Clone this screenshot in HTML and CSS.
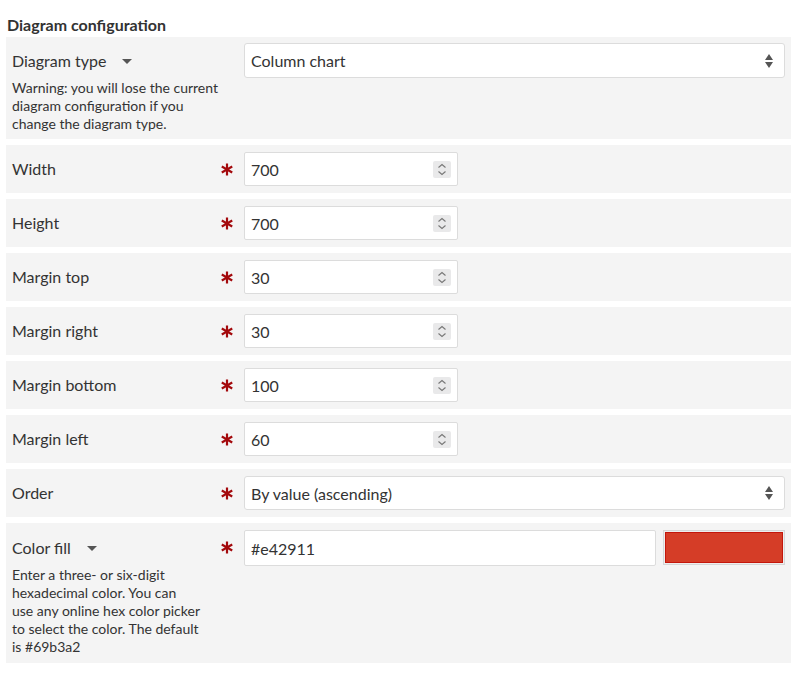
FILE: index.html
```html
<!DOCTYPE html>
<html>
<head>
<meta charset="utf-8">
<link rel="stylesheet" href="styles.css">
</head>
<body>
<div class="page">
  <h2 class="title">Diagram configuration</h2>

  <div class="row row-first">
    <div class="label-col">
      <div class="label">Diagram type <span class="caret"></span></div>
      <div class="help">Warning: you will lose the current diagram configuration if you change the diagram type.</div>
    </div>
    <div class="req"></div>
    <div class="field">
      <div class="select"><span class="val">Column chart</span>
        <svg class="updown" width="10" height="16" viewBox="0 0 10 16"><path d="M5 1 L9 7 L1 7 Z M5 15 L9 9 L1 9 Z" fill="#555"/></svg>
      </div>
    </div>
  </div>

  <div class="row">
    <div class="label-col"><div class="label">Width</div></div>
    <div class="req"><svg class="ast" width="12" height="13" viewBox="0 0 12 13"><g stroke="#a3090c" stroke-width="2.2" stroke-linecap="butt"><line x1="6" y1="0.5" x2="6" y2="12.5"/><line x1="0.8" y1="3.5" x2="11.2" y2="9.5"/><line x1="0.8" y1="9.5" x2="11.2" y2="3.5"/></g></svg></div>
    <div class="field">
      <div class="num"><span class="val">700</span><span class="spin"><svg width="18" height="17" viewBox="0 0 18 17"><path d="M5.5 6.5 L9 3.5 L12.5 6.5 M5.5 10.5 L9 13.5 L12.5 10.5" fill="none" stroke="#777" stroke-width="1.1"/></svg></span></div>
    </div>
  </div>

  <div class="row">
    <div class="label-col"><div class="label">Height</div></div>
    <div class="req"><svg class="ast" width="12" height="13" viewBox="0 0 12 13"><g stroke="#a3090c" stroke-width="2.2"><line x1="6" y1="0.5" x2="6" y2="12.5"/><line x1="0.8" y1="3.5" x2="11.2" y2="9.5"/><line x1="0.8" y1="9.5" x2="11.2" y2="3.5"/></g></svg></div>
    <div class="field">
      <div class="num"><span class="val">700</span><span class="spin"><svg width="18" height="17" viewBox="0 0 18 17"><path d="M5.5 6.5 L9 3.5 L12.5 6.5 M5.5 10.5 L9 13.5 L12.5 10.5" fill="none" stroke="#777" stroke-width="1.1"/></svg></span></div>
    </div>
  </div>

  <div class="row">
    <div class="label-col"><div class="label">Margin top</div></div>
    <div class="req"><svg class="ast" width="12" height="13" viewBox="0 0 12 13"><g stroke="#a3090c" stroke-width="2.2"><line x1="6" y1="0.5" x2="6" y2="12.5"/><line x1="0.8" y1="3.5" x2="11.2" y2="9.5"/><line x1="0.8" y1="9.5" x2="11.2" y2="3.5"/></g></svg></div>
    <div class="field">
      <div class="num"><span class="val">30</span><span class="spin"><svg width="18" height="17" viewBox="0 0 18 17"><path d="M5.5 6.5 L9 3.5 L12.5 6.5 M5.5 10.5 L9 13.5 L12.5 10.5" fill="none" stroke="#777" stroke-width="1.1"/></svg></span></div>
    </div>
  </div>

  <div class="row">
    <div class="label-col"><div class="label">Margin right</div></div>
    <div class="req"><svg class="ast" width="12" height="13" viewBox="0 0 12 13"><g stroke="#a3090c" stroke-width="2.2"><line x1="6" y1="0.5" x2="6" y2="12.5"/><line x1="0.8" y1="3.5" x2="11.2" y2="9.5"/><line x1="0.8" y1="9.5" x2="11.2" y2="3.5"/></g></svg></div>
    <div class="field">
      <div class="num"><span class="val">30</span><span class="spin"><svg width="18" height="17" viewBox="0 0 18 17"><path d="M5.5 6.5 L9 3.5 L12.5 6.5 M5.5 10.5 L9 13.5 L12.5 10.5" fill="none" stroke="#777" stroke-width="1.1"/></svg></span></div>
    </div>
  </div>

  <div class="row">
    <div class="label-col"><div class="label">Margin bottom</div></div>
    <div class="req"><svg class="ast" width="12" height="13" viewBox="0 0 12 13"><g stroke="#a3090c" stroke-width="2.2"><line x1="6" y1="0.5" x2="6" y2="12.5"/><line x1="0.8" y1="3.5" x2="11.2" y2="9.5"/><line x1="0.8" y1="9.5" x2="11.2" y2="3.5"/></g></svg></div>
    <div class="field">
      <div class="num"><span class="val">100</span><span class="spin"><svg width="18" height="17" viewBox="0 0 18 17"><path d="M5.5 6.5 L9 3.5 L12.5 6.5 M5.5 10.5 L9 13.5 L12.5 10.5" fill="none" stroke="#777" stroke-width="1.1"/></svg></span></div>
    </div>
  </div>

  <div class="row">
    <div class="label-col"><div class="label">Margin left</div></div>
    <div class="req"><svg class="ast" width="12" height="13" viewBox="0 0 12 13"><g stroke="#a3090c" stroke-width="2.2"><line x1="6" y1="0.5" x2="6" y2="12.5"/><line x1="0.8" y1="3.5" x2="11.2" y2="9.5"/><line x1="0.8" y1="9.5" x2="11.2" y2="3.5"/></g></svg></div>
    <div class="field">
      <div class="num"><span class="val">60</span><span class="spin"><svg width="18" height="17" viewBox="0 0 18 17"><path d="M5.5 6.5 L9 3.5 L12.5 6.5 M5.5 10.5 L9 13.5 L12.5 10.5" fill="none" stroke="#777" stroke-width="1.1"/></svg></span></div>
    </div>
  </div>

  <div class="row">
    <div class="label-col"><div class="label">Order</div></div>
    <div class="req"><svg class="ast" width="12" height="13" viewBox="0 0 12 13"><g stroke="#a3090c" stroke-width="2.2"><line x1="6" y1="0.5" x2="6" y2="12.5"/><line x1="0.8" y1="3.5" x2="11.2" y2="9.5"/><line x1="0.8" y1="9.5" x2="11.2" y2="3.5"/></g></svg></div>
    <div class="field">
      <div class="select"><span class="val">By value (ascending)</span>
        <svg class="updown" width="10" height="16" viewBox="0 0 10 16"><path d="M5 1 L9 7 L1 7 Z M5 15 L9 9 L1 9 Z" fill="#555"/></svg>
      </div>
    </div>
  </div>

  <div class="row">
    <div class="label-col">
      <div class="label">Color fill <span class="caret"></span></div>
      <div class="help">Enter a three- or six-digit hexadecimal color. You can<br>use any online hex color picker<br>to select the color. The default<br>is #69b3a2</div>
    </div>
    <div class="req"><svg class="ast" width="12" height="13" viewBox="0 0 12 13"><g stroke="#a3090c" stroke-width="2.2"><line x1="6" y1="0.5" x2="6" y2="12.5"/><line x1="0.8" y1="3.5" x2="11.2" y2="9.5"/><line x1="0.8" y1="9.5" x2="11.2" y2="3.5"/></g></svg></div>
    <div class="field color-field">
      <div class="text"><span class="val">#e42911</span></div>
      <div class="swatch"><div class="swatch-inner"></div></div>
    </div>
  </div>
</div>
</body>
</html>
```

FILE: styles.css
```css
* { box-sizing: border-box; }
html, body { margin: 0; padding: 0; background: #fff; }
body {
  font-family: Lato, "Noto Sans", sans-serif;
  color: #333;
}
.page {
  padding: 0 9px 0 6px;
}
.title {
  margin: 0;
  padding: 16px 0 3px 1px;
  font-size: 16px;
  font-weight: 700;
  line-height: 18px;
  color: #333;
}
.row {
  display: grid;
  grid-template-columns: 200px 32px 1fr;
  align-items: start;
  background: #f4f4f4;
  padding: 7px 6px;
  margin-bottom: 6px;
}
.row-first {
  padding: 6px 6px;
}
.label-col { min-width: 0; }
.label {
  font-size: 16px;
  line-height: 36px;
  height: 34px;
  color: #333;
  display: flex;
  align-items: center;
}
.row-first .label, .row:last-child .label { height: 36px; }
.caret {
  display: inline-block;
  width: 0;
  height: 0;
  margin-left: 16px;
  border-left: 5px solid transparent;
  border-right: 5px solid transparent;
  border-top: 5px solid #555;
}
.help {
  font-size: 14px;
  line-height: 18px;
  color: #333;
  width: 206px;
}
.req {
  height: 34px;
  display: flex;
  align-items: center;
  justify-content: center;
  padding-right: 2px;
}
.field { min-width: 0; }
.select, .num, .text {
  height: 34px;
  background: #fff;
  border: 1px solid #dcdcdc;
  border-radius: 3px;
  display: flex;
  align-items: center;
  padding: 0 10px 0 6px;
  font-size: 16px;
  color: #333;
}
.row-first .select { height: 35px; }
.select .val, .num .val, .text .val { flex: 1; }
.num {
  width: 214px;
  padding-right: 6px;
  border-radius: 2px;
}
.spin {
  width: 18px;
  height: 17px;
  background: #e9e9ea;
  border-radius: 2px;
  display: flex;
}
.color-field {
  display: flex;
  gap: 7px;
}
.text {
  flex: 1;
  height: 36px;
  border-radius: 2px;
}
.swatch {
  width: 122px;
  height: 35px;
  border: 1px solid #d6d6d6;
  padding: 1px;
  background: #eee;
}
.swatch-inner {
  width: 100%;
  height: 100%;
  background: #d53d27;
  border: 1px solid #c4160b;
}
```
